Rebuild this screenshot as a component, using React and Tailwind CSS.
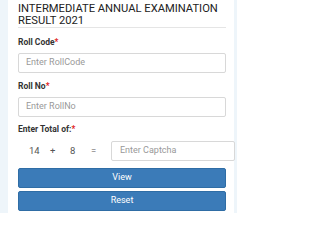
export default function App() {
  const font = { fontFamily: 'Roboto, "Liberation Sans", sans-serif' };
  return (
    <div className="w-[237px] h-[213px] overflow-hidden bg-[#eef5fa] pl-[8px]" style={font}>
      <div className="w-[226px] h-[213px] bg-white pl-[10px] pr-[8px]">
        <div className="pt-[3px] text-[11.2px] leading-[11.5px] text-[#222] whitespace-nowrap">
          INTERMEDIATE ANNUAL EXAMINATION
          <br />
          RESULT 2021
        </div>
        <div className="mt-[1px] border-t border-[#e5e5e5]" />
        <div className="mt-[8px] text-[8.5px] leading-[12px] font-bold text-[#333]">
          Roll Code<span className="text-[#e02020]">*</span>
        </div>
        <div className="mt-[5px] h-[20px] w-[208px] rounded-[2px] border border-[#d8d8d8] flex items-center pl-[7px] text-[9px] text-[#999]">
          Enter RollCode
        </div>
        <div className="mt-[7px] text-[8.5px] leading-[12px] font-bold text-[#333]">
          Roll No<span className="text-[#e02020]">*</span>
        </div>
        <div className="mt-[5px] h-[20px] w-[208px] rounded-[2px] border border-[#d8d8d8] flex items-center pl-[7px] text-[9px] text-[#999]">
          Enter RollNo
        </div>
        <div className="mt-[6px] text-[8.5px] leading-[12px] font-bold text-[#333]">
          Enter Total of:<span className="text-[#e02020]">*</span>
        </div>
        <div className="mt-[6px] flex items-center h-[20px] text-[9.5px] text-[#555]">
          <span className="ml-[11px] w-[21px] shrink-0">14</span>
          <span className="w-[20px] shrink-0">+</span>
          <span className="w-[21px] shrink-0">8</span>
          <span className="w-[20px] shrink-0">=</span>
          <div className="h-[20px] w-[124px] shrink-0 rounded-[2px] border border-[#d8d8d8] flex items-center pl-[8px] text-[9px] text-[#999]">
            Enter Captcha
          </div>
        </div>
        <div className="mt-[7px] h-[20px] w-[208px] rounded-[2px] bg-[#3b7bb8] border border-[#2f6da5] flex items-center justify-center text-[9px] text-white">
          View
        </div>
        <div className="mt-[3px] h-[20px] w-[208px] rounded-[2px] bg-[#3b7bb8] border border-[#2f6da5] flex items-center justify-center text-[9px] text-white">
          Reset
        </div>
      </div>
    </div>
  );
}
